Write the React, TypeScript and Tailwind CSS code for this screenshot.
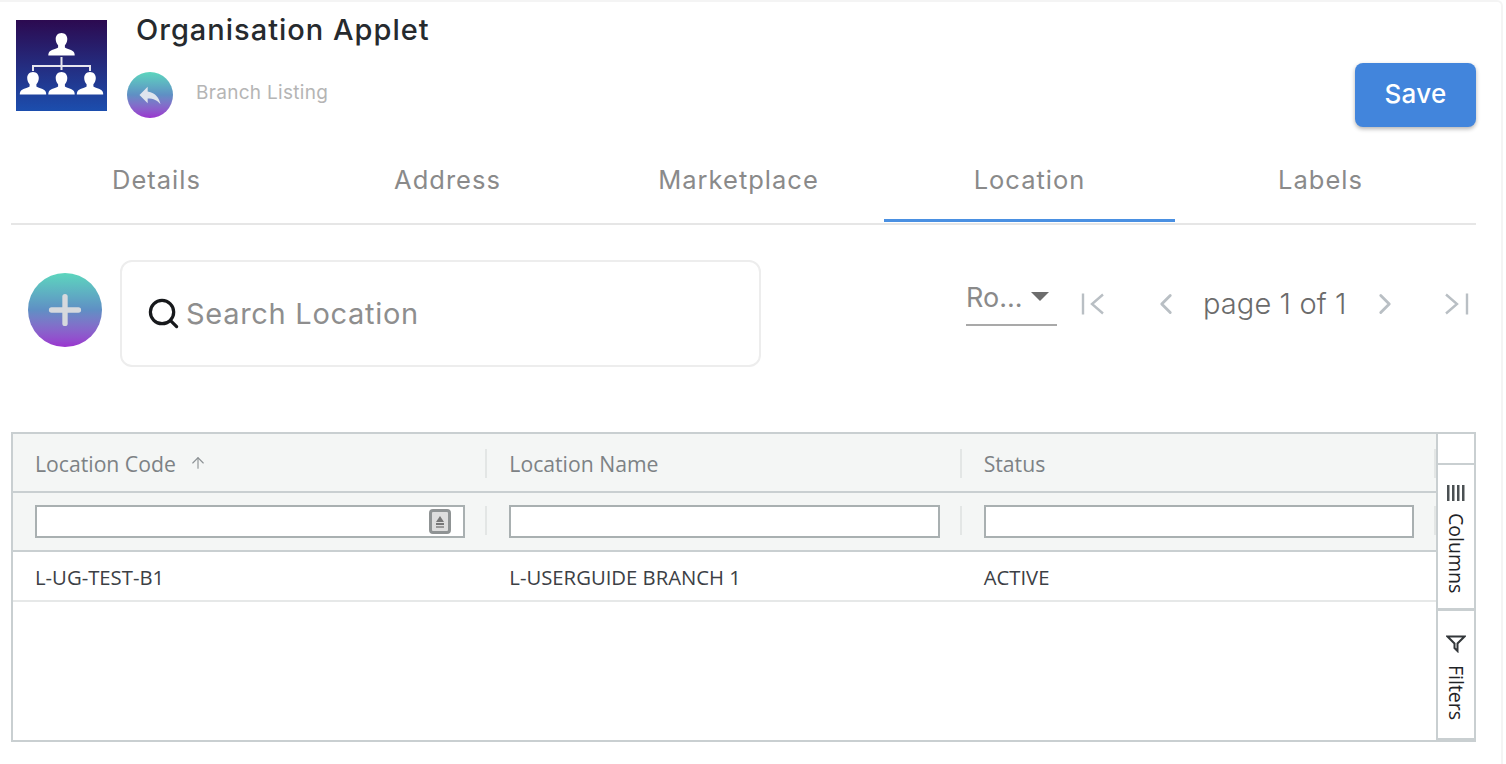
import { ArrowUp, ChevronLeft, ChevronRight, Plus, Search } from 'lucide-react';

const poppins = 'font-["Inter","Noto_Sans",sans-serif]';

const tabs = ['Details', 'Address', 'Marketplace', 'Location', 'Labels'];

const columns = [
  { label: 'Location Code', value: 'L-UG-TEST-B1', sorted: true },
  { label: 'Location Name', value: 'L-USERGUIDE BRANCH 1' },
  { label: 'Status', value: 'ACTIVE' },
];

function Person({ x, y }: { x: number; y: number }) {
  return (
    <path
      transform={`translate(${x} ${y})`}
      d="M0 0c-3.800 0-5.800 2.800-5.800 6 0 2.600 1 4.800 2.400 6.200v2.200c-1.600 1.600-7.800 2-9.200 5-.5 1-.6 2-.6 3.100h26.400c0-1.100-.1-2.100-.6-3.100-1.400-3-7.600-3.400-9.200-5v-2.200c1.400-1.400 2.400-3.600 2.400-6.200 0-3.200-2-6-5.800-6z"
      fill="#fff"
    />
  );
}

function Logo() {
  return (
    <svg viewBox="0 0 91 91" className="w-[91px] h-[91px] shrink-0">
      <defs>
        <linearGradient id="logoBg" x1="0" y1="0" x2="0" y2="1">
          <stop offset="0" stopColor="#2c0a50" />
          <stop offset="1" stopColor="#1c4eae" />
        </linearGradient>
      </defs>
      <rect width="91" height="91" fill="url(#logoBg)" />
      <Person x={45.500} y={13} />
      <path d="M45.500 37v13M17 51v-5h57v5" stroke="#e6e6ee" strokeWidth="2" fill="none" />
      <Person x={17} y={52} />
      <Person x={45.500} y={52} />
      <Person x={74} y={52} />
    </svg>
  );
}

function GradientCircle({ className, children }: { className: string; children: React.ReactNode }) {
  return (
    <div className={`rounded-full bg-gradient-to-b from-[#5cd6bd] via-[#5f8fc4] to-[#9a33cf] flex items-center justify-center shrink-0 ${className}`}>
      {children}
    </div>
  );
}

function ReplyIcon() {
  return (
    <svg width="28" height="28" viewBox="0 0 24 24" fill="#dfe4ee">
      <path d="M10 9V5l-7 7 7 7v-4.100c5 0 8.500 1.600 11 5.100-1-5-4-10-11-11z" />
    </svg>
  );
}

function FirstIcon() {
  return (
    <svg width="26" height="24" viewBox="0 0 26 24" fill="none" stroke="#b9bfc4" strokeWidth="2.400">
      <path d="M2 1.500v21M22 2.500 11 12l11 9.500" />
    </svg>
  );
}

function LastIcon() {
  return (
    <svg width="26" height="24" viewBox="0 0 26 24" fill="none" stroke="#b9bfc4" strokeWidth="2.400">
      <path d="M24 1.500v21M3 2.500 14 12 3 21.500" />
    </svg>
  );
}

export default function App() {
  return (
    <div className="w-[1506px] h-[764px] bg-white overflow-hidden">
      <div className={`w-[1503px] h-[764px] pt-[2px] border-t-2 border-r-2 border-[#f4f4f4] rounded-tr-md ${poppins}`}>
        {/* Header */}
        <div className="flex items-start pl-[16px] pr-[25px] pt-[16px] h-[138px]">
          <Logo />
          <div className="ml-[29px] flex-1 -mt-[8px]">
            <div className="text-[29px] leading-[36px] font-medium text-[#262a2e] tracking-[1px]">Organisation Applet</div>
            <div className="flex items-center -ml-[9px] mt-[24px]">
              <GradientCircle className="w-[46px] h-[46px]">
                <ReplyIcon />
              </GradientCircle>
              <div className="ml-[23px] text-[19px] tracking-[0.3px] text-[#b5b5b5] -mt-[4px]">Branch Listing</div>
            </div>
          </div>
          <button className="mt-[43px] w-[121px] h-[64px] pb-[3px] rounded-lg bg-[#4285dc] text-white text-[26px] tracking-[0.3px] font-medium shadow-[0_2px_4px_rgba(0,0,0,0.3)]">
            Save
          </button>
        </div>

        {/* Tabs */}
        <div className="ml-[11px] mr-[25px] h-[83px] flex border-b-2 border-[#e6e6e6]">
          {tabs.map((tab) => (
            <div
              key={tab}
              className={`w-[291px] h-[80px] pt-[20px] text-center text-[25.500px] tracking-[1px] leading-[36px] text-[#8a8a8a] ${
                tab === 'Location' ? 'border-b-[3px] border-[#4a90e2]' : ''
              }`}
            >
              {tab}
            </div>
          ))}
        </div>

        {/* Toolbar */}
        <div className="flex items-start ml-[28px] mr-[30px] mt-[35px] h-[107px]">
          <GradientCircle className="w-[74px] h-[74px] mt-[13px] mr-[18px]">
            <Plus size={46} strokeWidth={2.800} color="#d6d9dd" />
          </GradientCircle>
          <div className="w-[641px] h-[107px] border-2 border-[#ededed] rounded-xl flex items-center pl-[24px]">
            <Search size={35} strokeWidth={2.200} color="#17191c" className="shrink-0" />
            <span className="ml-[5px] text-[29px] tracking-[0.7px] text-[#8e8e8e]">Search Location</span>
          </div>
          <div className="ml-[205px] mt-[15px] w-[91px] h-[51px] border-b-2 border-[#a9a9a9] flex items-start pt-[3px]">
            <span className="text-[27px] text-[#8a8a8a] leading-[40px]">Ro...</span>
            <span className="ml-[8px] mt-[14px] w-0 h-0 border-l-[9px] border-r-[9px] border-t-[9px] border-l-transparent border-r-transparent border-t-[#6d6d6d]" />
          </div>
          <div className="flex-1 flex items-center mt-[24px] h-[40px]">
            <div className="ml-[24px]">
              <FirstIcon />
            </div>
            <ChevronLeft size={34} color="#b9bfc4" strokeWidth={2} className="ml-[42px]" />
            <span className="ml-[20px] text-[29px] tracking-[0.1px] text-[#6b6b6b] font-light whitespace-nowrap">page 1 of 1</span>
            <ChevronRight size={34} color="#b9bfc4" strokeWidth={2} className="ml-[21px]" />
            <div className="ml-[41px]">
              <LastIcon />
            </div>
          </div>
        </div>

        {/* Grid */}
        <div className="ml-[11px] mt-[65px] w-[1465px] h-[310px] border-2 border-[#c9cfd1] flex font-['Open_Sans',sans-serif]">
          <div className="flex-1 min-w-0">
            <div className="h-[59px] pt-[3px] bg-[#f4f6f5] border-b-2 border-[#c9cfd1] flex">
              {columns.map((col) => (
                <div key={col.label} className="flex-1 flex items-center pl-[22px] relative">
                  <span className="text-[21.200px] text-[#7d8285]">{col.label}</span>
                  {col.sorted && <ArrowUp size={18} color="#8d9295" strokeWidth={1.500} className="ml-[13px] -mt-[3px]" />}
                  <span className="absolute right-0 top-[12px] w-[2px] h-[29px] bg-[#e3e6e5]" />
                </div>
              ))}
            </div>
            <div className="h-[59px] bg-[#f4f6f5] border-b-2 border-[#c9cfd1] flex">
              {columns.map((col) => (
                <div key={col.label} className="flex-1 flex items-center pl-[22px] pr-[22px] relative">
                  <div className="w-full h-[33px] border-2 border-[#a9b0b1] bg-white flex items-center justify-end pr-[12px]">
                    {col.sorted && (
                      <span className="w-[22px] h-[25px] rounded-[4px] border-[3px] border-[#8f9394] bg-[#dedede] flex flex-col items-center justify-center gap-[1px]">
                        <span className="w-0 h-0 border-l-[4px] border-r-[4px] border-b-[6px] border-l-transparent border-r-transparent border-b-[#777]" />
                        <span className="w-[8px] h-[2px] bg-[#777]" />
                        <span className="w-[8px] h-[2px] bg-[#999]" />
                      </span>
                    )}
                  </div>
                  <span className="absolute right-0 top-[13px] w-[2px] h-[29px] bg-[#e3e6e5]" />
                </div>
              ))}
            </div>
            <div className="h-[50px] pt-[3px] border-b-2 border-[#e6e8e8] flex">
              {columns.map((col) => (
                <div key={col.label} className="flex-1 flex items-center pl-[22px] text-[20.300px] text-[#3c4045]">
                  {col.value}
                </div>
              ))}
            </div>
          </div>

          {/* Side bar */}
          <div className="w-[38px] border-l-2 border-[#c9cfd1] flex flex-col text-[#1f2326]">
            <div className="h-[31px] border-b-2 border-[#c9cfd1]" />
            <div className="h-[146px] border-b-[3px] border-[#c9cfd1] flex flex-col items-center pt-[20px]">
              <svg width="20" height="16" viewBox="0 0 20 16" fill="#4b5053">
                <rect x="1" width="2.500" height="16" />
                <rect x="6" width="2.500" height="16" />
                <rect x="11" width="2.500" height="16" />
                <rect x="16" width="2.500" height="16" />
              </svg>
              <span className="[writing-mode:vertical-rl] text-[19.500px] leading-[20px] mt-[12px]">Columns</span>
            </div>
            <div className="h-[129px] border-b-2 border-[#c9cfd1] flex flex-col items-center pt-[24px]">
              <svg width="20" height="18" viewBox="0 0 20 18" fill="none" stroke="#33373a" strokeWidth="2">
                <path d="M1.500 1.500h17l-7 7v7.500l-3-3v-4.500z" />
              </svg>
              <span className="[writing-mode:vertical-rl] text-[19.500px] leading-[20px] mt-[12px]">Filters</span>
            </div>
          </div>
        </div>
      </div>
    </div>
  );
}
